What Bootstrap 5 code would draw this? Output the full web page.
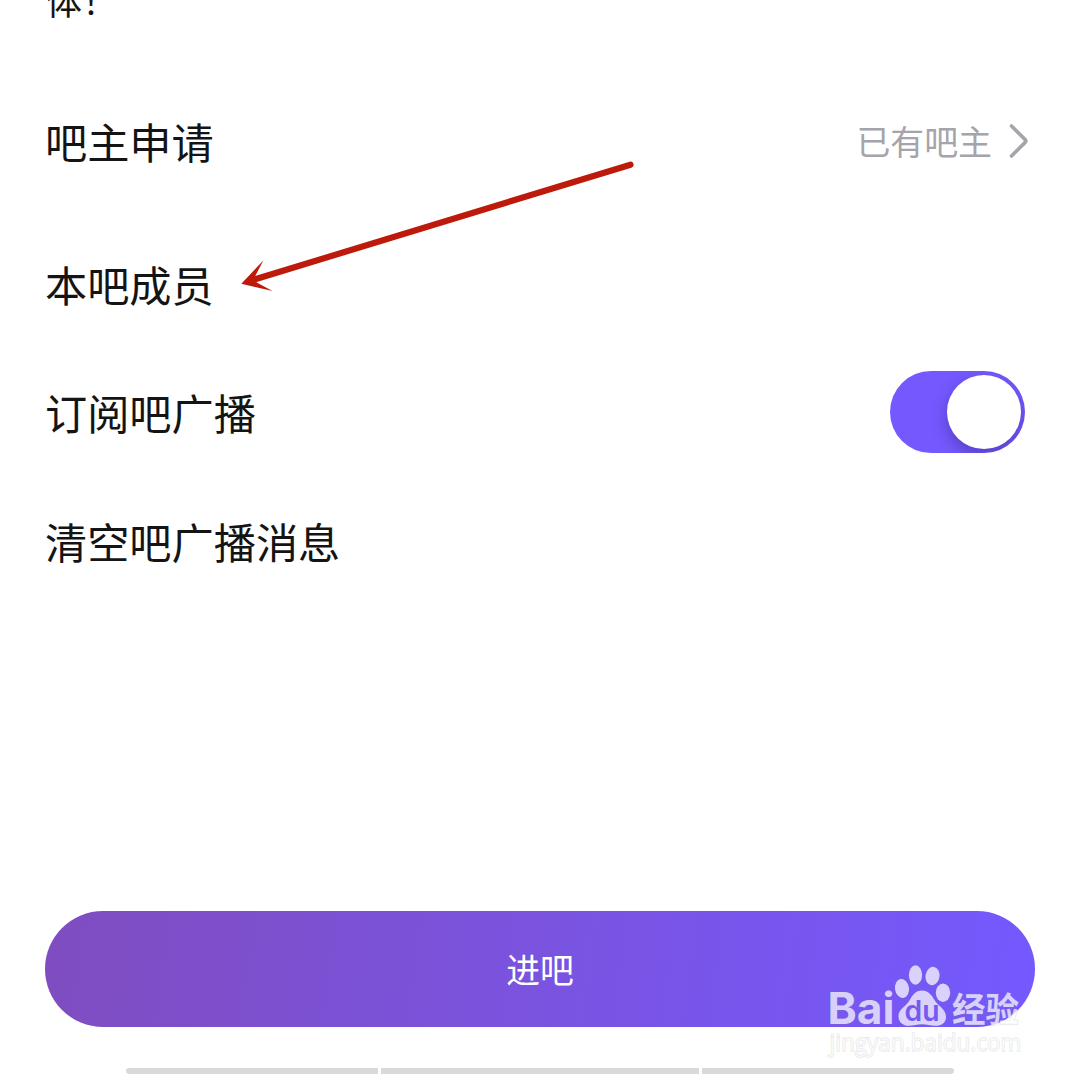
<!DOCTYPE html>
<html lang="zh-CN">
<head>
<meta charset="utf-8">
<meta name="viewport" content="width=device-width, initial-scale=1">
<title>吧资料</title>
<link href="https://cdn.jsdelivr.net/npm/bootstrap@5.3.0/dist/css/bootstrap.min.css" rel="stylesheet">
<style>
body{font-family:"Noto Sans CJK SC",sans-serif;color:#141414;background:#fff}
.screen{width:1080px;height:1080px}
.intro-end{height:69px;font-size:36px;line-height:54px;padding-left:46px}
.intro-end span{margin-top:-28px}
.setting{padding:0 55px 0 45px;font-size:42.2px;line-height:1;background:transparent;color:inherit}
.setting-tall{height:143px}
.setting-switch{height:113px}
.setting-last{height:146px}
.setting-first{padding-right:52px}
.setting-first>span:first-child,.setting-name{padding-top:1px}
.setting-state{font-size:33.9px;color:#a5a4aa;gap:15px}
.switch-track{width:135px;height:82px;background:#7559ff;padding:4px}
.switch-knob{width:74px;height:74px;box-shadow:0 6px 16px rgba(30,15,90,.36)}
.enter-wrap{padding:0 45px}
.btn-enter,.btn-enter:hover{height:116px;font-size:33.8px;line-height:1;color:#fff;border:0;background:linear-gradient(98deg,#7f4dc0,#7559ff)}
.dock{padding:41px 126px 6px;gap:3px}
.dock div{height:6px;background:#d9d9d9}
.pointer{left:230px;top:150px;pointer-events:none}
.brand{left:820px;top:955px;pointer-events:none}
</style>
</head>
<body>
<main class="screen position-relative overflow-hidden d-flex flex-column">
  <div class="intro-end d-flex align-items-start flex-shrink-0"><span>体！</span></div>
  <div class="list-group list-group-flush">
    <div class="setting setting-tall setting-first d-flex align-items-center justify-content-between">
      <span>吧主申请</span>
      <span class="setting-state d-flex align-items-center"><span>已有吧主</span>
        <svg width="21" height="36" viewBox="0 0 21 36" fill="none" stroke="#a5a4aa" stroke-width="3.6" stroke-linecap="round" stroke-linejoin="round"><path d="M4.500 3 18.200 16.600Q19.500 18 18.200 19.400L4.500 33"/></svg>
      </span>
    </div>
    <div class="setting setting-tall d-flex align-items-center"><span class="setting-name">本吧成员</span></div>
    <div class="setting setting-switch d-flex align-items-center justify-content-between">
      <span class="setting-name">订阅吧广播</span>
      <div class="switch-track rounded-pill overflow-hidden d-flex justify-content-end" role="switch" aria-checked="true"><div class="switch-knob rounded-circle bg-white"></div></div>
    </div>
    <div class="setting setting-last d-flex align-items-center"><span class="setting-name">清空吧广播消息</span></div>
  </div>
  <div class="enter-wrap mt-auto"><button class="btn btn-enter rounded-pill w-100">进吧</button></div>
  <div class="dock d-flex">
    <div class="rounded-start-pill" style="width:252px"></div>
    <div style="width:318px"></div>
    <div class="rounded-end-pill" style="width:252px"></div>
  </div>

  <svg class="pointer position-absolute" width="410" height="150" viewBox="0 0 410 150">
    <path d="M26 129 400.5 14.7" stroke="#bd1a0c" stroke-width="6.2" stroke-linecap="round"/>
    <path d="M11.3 133.7 33.3 110.5 25 126.5 26.7 132.4 42.5 141Z" fill="#bd1a0c"/>
  </svg>

  <svg class="brand position-absolute" width="215" height="110" viewBox="0 0 215 110">
    <g fill="#fff" fill-opacity=".73" stroke="#7f7f8c" stroke-opacity=".2" stroke-width="1.4" paint-order="stroke">
      <text x="7.500" y="69" font-size="43.500" font-weight="700" font-family="Inter, sans-serif" textLength="67" lengthAdjust="spacingAndGlyphs">Bai</text>
      <ellipse cx="82" cy="33.500" rx="7" ry="9.500" transform="rotate(-8 82 33.500)"/>
      <ellipse cx="95.500" cy="20" rx="6.600" ry="9.700"/>
      <ellipse cx="112.500" cy="21" rx="7" ry="9.200" transform="rotate(10 112.500 21)"/>
      <ellipse cx="123" cy="37.700" rx="7.200" ry="9.200"/>
      <path d="M102 35.500C109 35.500 112 41 115.500 46.500C119.500 52 126 54.500 126 62C126 68.500 120.500 71 115 70.800C110.500 70.600 107 69.300 102 69.300C97 69.300 93.500 70.600 89 70.800C83.500 71 78.500 67.500 78.500 61C78.500 54 86 51.500 89.500 45.500C92.500 40 95.500 35.500 102 35.500Z"/>
      <text x="132" y="67" font-size="34" font-weight="700" font-family="Noto Sans CJK SC, sans-serif" textLength="67" lengthAdjust="spacingAndGlyphs">经验</text>
      <text x="9.500" y="95.500" font-size="23" font-family="Open Sans, sans-serif" textLength="192" lengthAdjust="spacingAndGlyphs">jingyan.baidu.com</text>
    </g>
    <text x="84.500" y="65.500" font-size="28" font-weight="600" font-family="Inter, sans-serif" fill="#765af0" textLength="35" lengthAdjust="spacingAndGlyphs">du</text>
  </svg>
</main>
<script src="https://cdn.jsdelivr.net/npm/bootstrap@5.3.0/dist/js/bootstrap.bundle.min.js"></script>
</body>
</html>
